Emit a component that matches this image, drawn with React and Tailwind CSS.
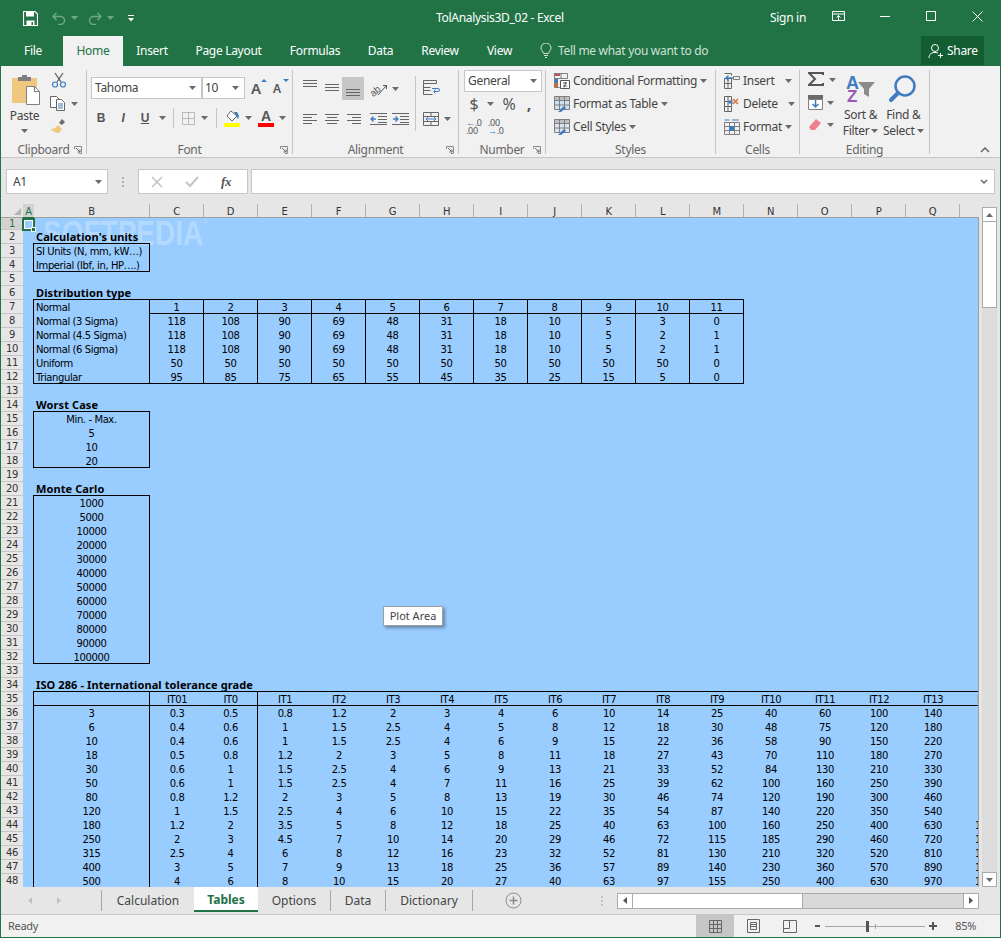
// Excel window: Tables sheet of TolAnalysis3D_02
import { Fragment } from "react"

const UI = "font-['Noto_Sans',sans-serif] tracking-[-0.3px]"
const CELL = "font-['DejaVu_Sans',sans-serif] tracking-[-0.4px]"

const HEAD_COLS = ["B", "C", "D", "E", "F", "G", "H", "I", "J", "K", "L", "M", "N", "O", "P", "Q"]

const DIST = {
  7: ["Normal", 1, 2, 3, 4, 5, 6, 7, 8, 9, 10, 11],
  8: ["Normal (3 Sigma)", 118, 108, 90, 69, 48, 31, 18, 10, 5, 3, 0],
  9: ["Normal (4.5 Sigma)", 118, 108, 90, 69, 48, 31, 18, 10, 5, 2, 1],
  10: ["Normal (6 Sigma)", 118, 108, 90, 69, 48, 31, 18, 10, 5, 2, 1],
  11: ["Uniform", 50, 50, 50, 50, 50, 50, 50, 50, 50, 50, 0],
  12: ["Triangular", 95, 85, 75, 65, 55, 45, 35, 25, 15, 5, 0],
}

const ISO_HEAD = ["", "IT01", "IT0", "IT1", "IT2", "IT3", "IT4", "IT5", "IT6", "IT7", "IT8", "IT9", "IT10", "IT11", "IT12", "IT13", "IT14"]
const ISO = [
  [3, 0.3, 0.5, 0.8, 1.2, 2, 3, 4, 6, 10, 14, 25, 40, 60, 100, 140, 250],
  [6, 0.4, 0.6, 1, 1.5, 2.5, 4, 5, 8, 12, 18, 30, 48, 75, 120, 180, 300],
  [10, 0.4, 0.6, 1, 1.5, 2.5, 4, 6, 9, 15, 22, 36, 58, 90, 150, 220, 360],
  [18, 0.5, 0.8, 1.2, 2, 3, 5, 8, 11, 18, 27, 43, 70, 110, 180, 270, 430],
  [30, 0.6, 1, 1.5, 2.5, 4, 6, 9, 13, 21, 33, 52, 84, 130, 210, 330, 520],
  [50, 0.6, 1, 1.5, 2.5, 4, 7, 11, 16, 25, 39, 62, 100, 160, 250, 390, 620],
  [80, 0.8, 1.2, 2, 3, 5, 8, 13, 19, 30, 46, 74, 120, 190, 300, 460, 740],
  [120, 1, 1.5, 2.5, 4, 6, 10, 15, 22, 35, 54, 87, 140, 220, 350, 540, 870],
  [180, 1.2, 2, 3.5, 5, 8, 12, 18, 25, 40, 63, 100, 160, 250, 400, 630, 1000],
  [250, 2, 3, 4.5, 7, 10, 14, 20, 29, 46, 72, 115, 185, 290, 460, 720, 1150],
  [315, 2.5, 4, 6, 8, 12, 16, 23, 32, 52, 81, 130, 210, 320, 520, 810, 1300],
  [400, 3, 5, 7, 9, 13, 18, 25, 36, 57, 89, 140, 230, 360, 570, 890, 1400],
  [500, 4, 6, 8, 10, 15, 20, 27, 40, 63, 97, 155, 250, 400, 630, 970, 1550],
]

const BOXES = {
  15: "Min. - Max.", 16: 5, 17: 10, 18: 20,
  21: 1000, 22: 5000, 23: 10000, 24: 20000, 25: 30000, 26: 40000,
  27: 50000, 28: 60000, 29: 70000, 30: 80000, 31: 90000, 32: 100000,
}

const TITLES = { 2: "Calculation's units", 6: "Distribution type", 14: "Worst Case", 20: "Monte Carlo", 34: "ISO 286 - International tolerance grade" }

function Caret({ className = "", color = "#6a6a6a" }) {
  return (
    <svg width="7" height="4" viewBox="0 0 7 4" className={className}>
      <path d="M0 0h7L3.5 4z" fill={color} />
    </svg>
  )
}

function Launcher() {
  return (
    <svg width="8" height="8" viewBox="0 0 8 8" className="absolute right-[4px] bottom-0">
      <path d="M0.5 3V0.5H7.5V7.5H5" fill="none" stroke="#8a8a8a" />
      <path d="M2 2l4 4M6 3.5V6H3.5" fill="none" stroke="#6a6a6a" />
    </svg>
  )
}

function Group({ label, className, launcher, children }) {
  return (
    <div className={`relative shrink-0 h-[84px] flex flex-col border-r border-[#c6c6c6] ${className}`}>
      <div className="h-[73px] shrink-0">{children}</div>
      <div className="shrink-0 text-center text-[12px] leading-[14px] text-[#666666]">{label}</div>
      {launcher && <Launcher />}
    </div>
  )
}

function Lines({ d, w = 16, h = 14, color = "#666666" }) {
  return (
    <svg width={w} height={h} viewBox={`0 0 ${w} ${h}`}>
      <path d={d} stroke={color} fill="none" />
    </svg>
  )
}

function TitleBar() {
  return (
    <div className="relative h-9 shrink-0 flex items-center bg-[#217346] text-white text-[12px]">
      <svg width="15" height="15" viewBox="0 0 15 15" className="ml-[22px]">
        <path d="M0.5 0.5h11.5l2.5 2.5v11.5h-14z" fill="none" stroke="#fff" strokeWidth="1.2" />
        <path d="M3 1h8v4.5h-8zM3.5 9.5h8v5h-8z" fill="#fff" />
        <path d="M8.5 11h1.5v3h-1.500z" fill="#217346" />
      </svg>
      <svg width="14" height="13" viewBox="0 0 14 13" className="ml-[14px]">
        <path d="M4.5 1L1 4.5 4.5 8M1.5 4.5h7a4 4 0 0 1 0 8H6" fill="none" stroke="#6fa888" strokeWidth="1.5" />
      </svg>
      <Caret className="ml-[5px]" color="#6fa888" />
      <svg width="14" height="13" viewBox="0 0 14 13" className="ml-[10px]">
        <path d="M9.5 1L13 4.5 9.5 8M12.5 4.5h-7a4 4 0 0 0 0 8H8" fill="none" stroke="#6fa888" strokeWidth="1.5" />
      </svg>
      <Caret className="ml-[5px]" color="#6fa888" />
      <svg width="6" height="7" viewBox="0 0 6 7" className="ml-[14px]">
        <path d="M0 0h6v1H0zM0 3h6L3 6.5z" fill="#fff" />
      </svg>
      <div className="absolute left-[435px] top-[9px] whitespace-nowrap">TolAnalysis3D_02 - Excel</div>
      <div className="absolute left-[769px] top-[9px]">Sign in</div>
      <svg width="13" height="11" viewBox="0 0 13 11" className="absolute left-[831px] top-[11px]">
        <path d="M0.5 0.5h12v9h-12zM0.5 3h12M6.5 9V4.5M4.5 6.5l2-2 2 2" fill="none" stroke="#fff" />
      </svg>
      <div className="absolute left-[879px] top-[16px] w-[10px] h-px bg-white" />
      <div className="absolute left-[925px] top-[11px] w-[10px] h-[10px] border border-white" />
      <svg width="11" height="11" viewBox="0 0 11 11" className="absolute left-[971px] top-[11px]">
        <path d="M0.5 0.5l10 10M10.5 0.5l-10 10" stroke="#fff" />
      </svg>
    </div>
  )
}

function RibbonTabs() {
  const tabs = [
    ["File", "w-[62px] pl-[2px]"],
    ["Home", "w-[60px] bg-[#f1f1f1] text-[#217346]"],
    ["Insert", "w-[58px]"],
    ["Page Layout", "w-[95px]"],
    ["Formulas", "w-[78px]"],
    ["Data", "w-[53px]"],
    ["Review", "w-[66px]"],
    ["View", "w-[53px]"],
  ]
  return (
    <div className="relative h-[30px] shrink-0 flex bg-[#217346] text-white text-[12px]">
      {tabs.map(([name, cls]) => (
        <div key={name} className={`h-full flex items-center justify-center ${cls}`}>{name}</div>
      ))}
      <svg width="12" height="15" viewBox="0 0 12 15" className="ml-[14px] mt-[7px]">
        <path d="M3.5 10.5C3 8 1 7.5 1 5a5 5 0 0 1 10 0c0 2.5-2 3-2.5 5.5zM4 12.5h4M5 14.5h2" fill="none" stroke="#d3e3da" />
      </svg>
      <div className="ml-[6px] flex items-center text-[#cfe0d6] whitespace-nowrap">Tell me what you want to do</div>
      <div className="absolute left-[920px] top-0 w-[63px] h-[29px] bg-[#135d33] flex items-center pl-[7px] gap-[3px]">
        <svg width="16" height="16" viewBox="0 0 16 16">
          <circle cx="7" cy="5" r="3.5" fill="none" stroke="#fff" />
          <path d="M1 15c0-4 3-5.5 6-5.5 1 0 2 .2 3 .7M12.5 10v5M10 12.5h5" fill="none" stroke="#fff" />
        </svg>
        <span>Share</span>
      </div>
    </div>
  )
}

function Clipboard() {
  return (
    <Group label="Clipboard" launcher className="w-[86px]">
      <div className="flex">
        <div className="w-[47px] flex flex-col items-center">
          <svg width="30" height="32" viewBox="0 0 30 32" className="mt-[4px] ml-[4px]">
            <path d="M0 4h25v25H0z" fill="#f0c77f" />
            <path d="M6 3h4V1h5v2h4v4H6z" fill="#7f7f7f" />
            <path d="M14.5 12.5h8l5 5v13h-13z" fill="#fff" stroke="#7f7f7f" />
            <path d="M22.5 12.5v5h5" fill="none" stroke="#7f7f7f" />
          </svg>
          <div className="text-[12px] leading-[14px] mt-[3px] text-[#444444]">Paste</div>
          <Caret className="mt-[6px]" />
        </div>
        <div className="flex flex-col items-start pt-[2px]">
          <svg width="16" height="16" viewBox="0 0 16 16" className="ml-[3px]">
            <path d="M4 1l6 9M12 1l-6 9" stroke="#555555" fill="none" strokeWidth="1.2" />
            <circle cx="4" cy="12.5" r="2.5" fill="none" stroke="#3f7cbf" strokeWidth="1.2" />
            <circle cx="12" cy="12.5" r="2.5" fill="none" stroke="#3f7cbf" strokeWidth="1.2" />
          </svg>
          <div className="flex items-center mt-[8px] ml-[2px]">
            <svg width="16" height="15" viewBox="0 0 16 15">
              <path d="M.5.5h6l3 3v8h-9z" fill="#fff" stroke="#666666" />
              <path d="M6.5 3.5h5l3 3v8h-8z" fill="#fff" stroke="#666666" />
              <path d="M8 8h5M8 10h5M8 12h5" stroke="#3f7cbf" />
            </svg>
            <Caret className="ml-[5px]" />
          </div>
          <svg width="16" height="16" viewBox="0 0 16 16" className="mt-[7px] ml-[2px]">
            <path d="M8 7l4 4-3 4c-3 0-7-2-8-4 2 0 5-1 7-4z" fill="#f0c77f" />
            <path d="M9 5l3-4 3 3-3 3z" fill="#6a6a6a" />
          </svg>
        </div>
      </div>
    </Group>
  )
}

function Font() {
  return (
    <Group label="Font" launcher className="w-[206px]">
      <div className="flex items-center pl-[4px] pt-[7px]">
        <div className="w-[111px] h-[22px] bg-white border border-[#c6c6c6] flex items-center justify-between pl-[3px] pr-[5px] text-[12px] text-[#444444]">
          Tahoma <Caret />
        </div>
        <div className="w-[43px] h-[22px] bg-white border border-[#c6c6c6] flex items-center justify-between pl-[2px] pr-[5px] text-[12px] text-[#444444]">
          10 <Caret />
        </div>
        <div className="relative ml-[6px] w-[14px] text-[15px] leading-[18px] font-semibold text-[#555555]">
          A<span className="absolute -right-[2px] top-0 border-x-[3px] border-b-[3px] border-x-transparent border-b-[#3f7cbf]" />
        </div>
        <div className="relative ml-[8px] w-[14px] pt-[2px] text-[12px] leading-[16px] font-semibold text-[#555555]">
          A<span className="absolute -right-[2px] top-0 border-x-[3px] border-t-[3px] border-x-transparent border-t-[#3f7cbf]" />
        </div>
      </div>
      <div className="flex items-center pl-[3px] mt-[9px] h-[20px] text-[#555555] font-['Liberation_Sans',sans-serif]">
        <span className="w-[22px] text-center font-bold text-[12px]">B</span>
        <span className="w-[22px] text-center italic font-bold text-[12px]">I</span>
        <span className="w-[22px] text-center underline font-bold text-[12px]">U</span>
        <Caret className="ml-[3px]" />
        <div className="ml-[7px] w-px h-[20px] bg-[#c6c6c6]" />
        <svg width="13" height="13" viewBox="0 0 13 13" className="ml-[8px]">
          <path d="M.5.5h12v12H.5zM6.5.5v12M.5 6.5h12" fill="none" stroke="#888888" strokeDasharray="1 1" />
        </svg>
        <Caret className="ml-[6px]" />
        <div className="ml-[8px] w-px h-[20px] bg-[#c6c6c6]" />
        <div className="ml-[7px] w-[16px] flex flex-col items-center">
          <svg width="15" height="13" viewBox="0 0 15 13">
            <path d="M6 1l6 5-5 5-5-5z" fill="#fff" stroke="#666666" />
            <path d="M9 2h3l2 4-1 3-2-3z" fill="#3f7cbf" />
          </svg>
          <div className="w-[16px] h-[4px] bg-[#ffff00]" />
        </div>
        <Caret className="ml-[5px]" />
        <div className="ml-[6px] w-[16px] flex flex-col items-center">
          <span className="text-[14px] leading-[13px] font-bold">A</span>
          <div className="w-[16px] h-[4px] bg-[#ff0000]" />
        </div>
        <Caret className="ml-[5px]" />
      </div>
    </Group>
  )
}

function Alignment() {
  const L = (ys, x1 = 1, x2 = 15) => ys.map((y, i) => `M${Array.isArray(x1) ? x1[i] : x1} ${y}H${Array.isArray(x2) ? x2[i] : x2}`).join("")
  return (
    <Group label="Alignment" launcher className="w-[166px]">
      <div className="flex">
        <div className="w-[122px] pl-[9px]">
          <div className="flex items-center pt-[7px] h-[30px]">
            <div className="w-[22px] -mt-[4px]"><Lines d={L([0.5, 3.5, 6.5])} /></div>
            <div className="w-[18px] -mt-[4px]"><Lines d={L([4.5, 7.5, 10.5])} /></div>
            <div className="w-[22px] h-[23px] bg-[#c6c6c6] flex items-center justify-center">
              <Lines d={L([7.5, 10.5, 13.5])} />
            </div>
            <svg width="18" height="16" viewBox="0 0 18 16" className="ml-[6px]">
              <text x="0" y="13" fontSize="10" fill="#555555" transform="rotate(-40 6 10)" fontFamily="Liberation Sans">ab</text>
              <path d="M8 14l8-9M13 4.5l3.5 0 0 3.5" stroke="#555555" fill="none" />
            </svg>
            <Caret className="ml-[4px]" />
          </div>
          <div className="flex items-center mt-[13px]">
            <div className="w-[22px]"><Lines d={L([1.5, 4.5, 7.5, 10.5], 1, [15, 10, 15, 10])} h={12} /></div>
            <div className="w-[22px]"><Lines d={L([1.5, 4.5, 7.5, 10.5], [1, 3, 1, 3], [15, 13, 15, 13])} h={12} /></div>
            <div className="w-[24px]"><Lines d={L([1.5, 4.5, 7.5, 10.5], [1, 6, 1, 6], 15)} h={12} /></div>
            <svg width="17" height="12" viewBox="0 0 17 12">
              <path d="M0 .5h17M8 3.5h9M8 6.5h9M8 9.5h9M0 11.5h17" stroke="#666666" fill="none" />
              <path d="M6 6H1M3.5 3.5L1 6l2.5 2.500" stroke="#3f7cbf" fill="none" strokeWidth="1.3" />
            </svg>
            <svg width="17" height="12" viewBox="0 0 17 12" className="ml-[5px]">
              <path d="M0 .5h17M8 3.5h9M8 6.5h9M8 9.5h9M0 11.5h17" stroke="#666666" fill="none" />
              <path d="M1 6h5M3.5 3.5L6 6 3.5 8.5" stroke="#3f7cbf" fill="none" strokeWidth="1.3" />
            </svg>
          </div>
        </div>
        <div className="mt-[6px] h-[55px] w-px bg-[#c6c6c6]" />
        <div className="pl-[7px] pt-[10px]">
          <svg width="17" height="15" viewBox="0 0 17 15" className="block">
            <path d="M.5.5h13v3h-13zM.5 3.5v11h9M.5 7.5h7M.5 10.5h7" fill="none" stroke="#666666" />
            <path d="M9 8.5h6a1.5 1.5 0 0 1 0 3h-4M12.5 9.500L10.5 11.5l2 2" fill="none" stroke="#3f7cbf" />
          </svg>
          <div className="flex items-center mt-[17px]">
            <svg width="16" height="14" viewBox="0 0 16 14">
              <path d="M.5.5h15v13h-15zM.5 4.5h15M.5 9.5h15M8 .5v4M8 9.5v4" fill="none" stroke="#666666" />
              <path d="M3 7h10M5 5L3 7l2 2M11 5l2 2-2 2" fill="none" stroke="#3f7cbf" />
            </svg>
            <Caret className="ml-[5px]" />
          </div>
        </div>
      </div>
    </Group>
  )
}

function NumberGroup() {
  return (
    <Group label="Number" launcher className="w-[87px]">
      <div className="ml-[5px] w-[78px] h-[22px] bg-white border border-[#c6c6c6] flex items-center justify-between pl-[3px] pr-[4px] text-[12px] text-[#444444]">
        General <Caret />
      </div>
      <div className="flex items-center mt-[1px] h-[21px] text-[#555555] text-[16px] text-center">
        <span className="ml-[8px] w-[14px]">$</span>
        <Caret className="ml-[6px]" />
        <span className="ml-[7px] w-[16px]">%</span>
        <span className="ml-[8px] w-[8px] font-bold leading-[10px]">,</span>
      </div>
      <div className="flex items-center mt-[5px] text-[9px] leading-[8px] text-[#555555]">
        <div className="ml-[7px] w-[18px]"><span className="text-[#3f7cbf]">←</span>.0<br />.00</div>
        <div className="ml-[4px] w-[18px]">.00<br /><span className="text-[#3f7cbf]">→</span>.0</div>
      </div>
    </Group>
  )
}

function StyleRow({ icon, label, caretClass = "ml-[3px]" }) {
  return (
    <div className="h-[23px] flex items-center text-[12px] text-[#444444] whitespace-nowrap">
      <div className="w-[19px] shrink-0">{icon}</div>
      {label}
      <Caret className={caretClass} />
    </div>
  )
}

function TableIcon({ fill = "#cfe0f2" }) {
  return (
    <svg width="16" height="16" viewBox="0 0 16 16" className="block">
      <path d="M.5.5h15v4H.5z" fill="#bfbfbf" />
      <path d="M.5 4.5h15v9H.5z" fill={fill} />
      <path d="M.5.5h15v13H.5zM.5 4.5h15M.5 9h15M5.5.5v13M10.5.5v13" fill="none" stroke="#7f7f7f" />
      <path d="M5 15l5-5 2 2-5 4H4z" fill="#3f7cbf" />
    </svg>
  )
}

function Styles() {
  return (
    <Group label="Styles" className="w-[170px]">
      <div className="pl-[8px] -mt-px">
        <StyleRow
          label="Conditional Formatting"
          icon={
            <svg width="16" height="16" viewBox="0 0 16 16" className="block">
              <path d="M0 0h6v3H0z" fill="#c0504d" />
              <path d="M0 6h4v4H0z" fill="#3f7cbf" />
              <path d="M0 10h4v4H0z" fill="#d9652b" />
              <path d="M.5.5h13v5h-13zM.5 5.5v9h5M7 .5v5" fill="none" stroke="#7f7f7f" />
              <path d="M6.5 7.5h9v8h-9zM9 10h4M9 13h4M12 9l-2 5.5" fill="#fff" stroke="#555555" />
            </svg>
          }
        />
        <StyleRow label="Format as Table" icon={<TableIcon />} />
        <StyleRow label="Cell Styles" icon={<TableIcon fill="#dbe5f1" />} />
      </div>
    </Group>
  )
}

function Cells() {
  return (
    <Group label="Cells" className="w-[84px]">
      <div className="pl-[8px] -mt-px">
        <StyleRow
          label="Insert"
          caretClass="ml-[10px]"
          icon={
            <svg width="16" height="16" viewBox="0 0 16 16" className="block">
              <path d="M.5 5.5h7v10h-7zM.5 10.5h7M4 5.5v10M.5.5h7v2" fill="none" stroke="#666666" />
              <path d="M9.5 3.5h6v3h-6z" fill="none" stroke="#7f7f7f" />
              <path d="M9 5H2M4.5 2.5L2 5l2.5 2.5" fill="none" stroke="#3f7cbf" strokeWidth="1.3" />
            </svg>
          }
        />
        <StyleRow
          label="Delete"
          caretClass="ml-[10px]"
          icon={
            <svg width="16" height="16" viewBox="0 0 16 16" className="block">
              <path d="M.5.5h7v15h-7zM.5 5.5h7M.5 10.5h7M4 .5v15" fill="none" stroke="#666666" />
              <path d="M9 3l5 5M14 3l-5 5" stroke="#e0703a" strokeWidth="1.5" />
              <path d="M4.5 4.5h4v3h-4z" fill="#3f7cbf" />
            </svg>
          }
        />
        <StyleRow
          label="Format"
          icon={
            <svg width="16" height="16" viewBox="0 0 16 16" className="block">
              <path d="M.5 3.5h15v12H.5zM.5 7.5h15M.5 11.5h15M5.5 3.5v12M10.5 3.5v12" fill="none" stroke="#7f7f7f" />
              <path d="M5 7h5v5H5z" fill="#3f7cbf" />
              <path d="M.5 1h5M8 1h7" stroke="#3f7cbf" />
            </svg>
          }
        />
      </div>
    </Group>
  )
}

function Editing() {
  return (
    <Group label="Editing" className="w-[130px]">
      <div className="flex">
        <div className="w-[44px] pl-[8px] pt-[2px] flex flex-col gap-[8px]">
          <div className="flex items-center">
            <svg width="16" height="15" viewBox="0 0 16 15">
              <path d="M15 3V1H1l6 6-6 6h14v-2" fill="none" stroke="#555555" strokeWidth="2" />
            </svg>
            <Caret className="ml-[5px]" />
          </div>
          <div className="flex items-center">
            <svg width="15" height="15" viewBox="0 0 15 15">
              <path d="M0 0h15v4H0z" fill="#6a6a6a" />
              <path d="M.5 4.5h14v10H.5z" fill="#fff" stroke="#7f7f7f" />
              <path d="M7.5 5v7M4.5 9l3 3 3-3" stroke="#3f7cbf" strokeWidth="1.5" fill="none" />
            </svg>
            <Caret className="ml-[4px]" />
          </div>
          <div className="flex items-center">
            <svg width="14" height="14" viewBox="0 0 14 14">
              <path d="M8 1l5 4-6 7H3L1 9z" fill="#ef7f91" />
            </svg>
            <Caret className="ml-[5px]" />
          </div>
        </div>
        <div className="w-[34px] flex flex-col items-center pt-[4px] text-[12px] leading-[16px] text-[#444444]">
          <svg width="32" height="33" viewBox="0 0 32 33">
            <text x="1" y="15" fontSize="18" fontWeight="bold" fill="#3f7cbf" fontFamily="Liberation Sans">A</text>
            <text x="2" y="28" fontSize="17" fontWeight="bold" fill="#9b59b6" fontFamily="Liberation Sans">Z</text>
            <path d="M13 8h17l-6 7v8l-5-3v-5z" fill="#8a8a8a" />
          </svg>
          <div className="whitespace-nowrap">Sort &amp;</div>
          <div className="flex items-center whitespace-nowrap">Filter<Caret className="ml-[2px]" /></div>
        </div>
        <div className="w-[52px] flex flex-col items-center pt-[4px] text-[12px] leading-[16px] text-[#444444]">
          <svg width="30" height="33" viewBox="0 0 30 33">
            <circle cx="17" cy="12" r="9.5" fill="none" stroke="#3f7cbf" strokeWidth="2.5" />
            <path d="M10 19L3 26" stroke="#3f7cbf" strokeWidth="4" strokeLinecap="round" />
          </svg>
          <div className="whitespace-nowrap">Find &amp;</div>
          <div className="flex items-center whitespace-nowrap">Select<Caret className="ml-[2px]" /></div>
        </div>
      </div>
    </Group>
  )
}

function Ribbon() {
  return (
    <div className="relative h-[92px] shrink-0 flex pt-[4px] bg-[#f1f1f1] border-b border-[#c6c6c6]">
      <Clipboard />
      <Font />
      <Alignment />
      <NumberGroup />
      <Styles />
      <Cells />
      <Editing />
      <svg width="10" height="6" viewBox="0 0 10 6" className="absolute right-[10px] bottom-[4px]">
        <path d="M1 5l4-4 4 4" fill="none" stroke="#666666" strokeWidth="1.5" />
      </svg>
    </div>
  )
}

function FormulaBar() {
  return (
    <div className="h-[46px] shrink-0 flex items-start pt-[11px] pl-[5px] bg-[#e6e6e6]">
      <div className="w-[102px] h-[25px] bg-white border border-[#c6c6c6] flex items-center justify-between pl-[6px] pr-[5px] text-[12px] text-[#444444]">
        A1 <Caret />
      </div>
      <div className="w-[30px] h-[25px] flex flex-col items-center justify-center gap-[2px]">
        <div className="w-[2px] h-[2px] bg-[#b0b0b0]" />
        <div className="w-[2px] h-[2px] bg-[#b0b0b0]" />
        <div className="w-[2px] h-[2px] bg-[#b0b0b0]" />
      </div>
      <div className="w-[110px] h-[25px] bg-white border border-[#c6c6c6] flex items-center text-[#b8b8b8]">
        <svg width="12" height="12" viewBox="0 0 12 12" className="ml-[12px]">
          <path d="M1 1l10 10M11 1L1 11" stroke="#c4c4c4" strokeWidth="1.6" />
        </svg>
        <svg width="14" height="12" viewBox="0 0 14 12" className="ml-[22px]">
          <path d="M1 6l4 4 8-9" stroke="#c4c4c4" strokeWidth="2" fill="none" />
        </svg>
        <span className="ml-[22px] text-[13px] italic font-['Liberation_Serif',serif] font-bold text-[#555555]">fx</span>
      </div>
      <div className="ml-[3px] w-[744px] h-[25px] bg-white border border-[#c6c6c6] flex items-center justify-end pr-[6px]">
        <svg width="8" height="6" viewBox="0 0 8 6">
          <path d="M1 1l3 3 3-3" fill="none" stroke="#666666" strokeWidth="1.5" />
        </svg>
      </div>
    </div>
  )
}

// one row of the sheet; B and C.. cells carry their own table lines
function SheetRow({ r }) {
  const height = r === 1 ? "h-[12px]" : "h-[14px]"
  const cell = "w-[54px] shrink-0 h-full text-center"
  let content = null

  if (TITLES[r]) {
    content = <div className="pl-[3px] font-bold tracking-[0.1px] leading-[14px] font-['Noto_Sans',sans-serif] text-[11px] whitespace-nowrap">{TITLES[r]}</div>
  } else if (r === 3 || r === 4) {
    content = (
      <div className={`w-[117px] h-full pl-[2px] border-x border-black whitespace-nowrap ${r === 4 ? "border-b" : ""}`}>
        {r === 3 ? "SI Units (N, mm, kW…)" : "Imperial (lbf, in, HP….)"}
      </div>
    )
  } else if (DIST[r]) {
    const [label, ...vals] = DIST[r]
    content = (
      <>
        <div className={`w-[117px] h-full pl-[2px] border-x border-black ${r === 12 ? "border-b" : ""}`}>{label}</div>
        {vals.map((v, i) => (
          <div key={i} className={`${cell} border-r border-black ${r === 7 || r === 12 ? "border-b" : ""}`}>{v}</div>
        ))}
      </>
    )
  } else if (BOXES[r] !== undefined) {
    content = (
      <div className={`w-[117px] h-full text-center border-x border-black ${r === 18 || r === 32 ? "border-b" : ""}`}>{BOXES[r]}</div>
    )
  } else if (r >= 35) {
    const vals = r === 35 ? ISO_HEAD : ISO[r - 36]
    content = (
      <>
        <div className={`w-[117px] shrink-0 h-full text-center border-x border-black ${r === 35 ? "border-b" : ""}`}>{vals[0]}</div>
        {vals.slice(1).map((v, i) => (
          <div key={i} className={`${cell} ${i === 1 ? "border-r border-black" : ""} ${r === 35 ? "border-b border-black" : ""}`}>{v}</div>
        ))}
      </>
    )
  }

  const topLine = r === 3 || r === 7 || r === 15 || r === 21 || r === 35
  return (
    <div className={`${height} flex leading-[16px] ${topLine ? "relative" : ""}`}>
      {content}
      {topLine && (
        <div className={`absolute left-0 -top-px h-px bg-black ${r === 3 || r === 15 || r === 21 ? "w-[117px]" : r === 7 ? "w-[711px]" : "w-[1000px]"}`} />
      )}
    </div>
  )
}

function Sheet() {
  const rows = Array.from({ length: 48 }, (_, i) => i + 1)
  return (
    <div className="relative h-[683px] shrink-0 flex bg-[#e6e6e6] text-[10px] text-black">
      <div className={`w-[978px] shrink-0 flex flex-col ${CELL}`}>
        {/* column headers */}
        <div className="h-[13px] shrink-0 flex border-b border-[#9f9f9f] leading-[15px] text-[#333333] box-content">
          <div className="relative w-[22px] shrink-0">
            <div className="absolute right-[2px] bottom-[2px] border-l-[7px] border-b-[7px] border-l-transparent border-b-[#b4b4b4]" />
          </div>
          <div className="w-[11px] shrink-0 text-center bg-[#d2d2d2] text-[#217346] border-b border-[#217346] -mb-px">A</div>
          {HEAD_COLS.map((c) => (
            <div key={c} className={`${c === "B" ? "w-[116px]" : "w-[54px]"} shrink-0 text-center border-r border-[#b1b1b1]`}>{c}</div>
          ))}
        </div>
        <div className="flex h-[669px] overflow-hidden">
          {/* row headers */}
          <div className="w-[22px] shrink-0 text-[#333333]">
            {rows.map((r) => (
              <div
                key={r}
                className={`${r === 1 ? "h-[12px] leading-[12px] bg-[#d2d2d2] text-[#217346]" : "h-[14px] leading-[13px]"} text-center border-b border-[#c6c6c6]`}
              >
                {r}
              </div>
            ))}
          </div>
          {/* cells */}
          <div className="relative flex-1 overflow-hidden bg-[#99ccff] border-r border-[#9f9f9f] pl-[10px]">
            {/* watermark */}
            <div className="absolute left-[20px] top-[-1px] flex items-start origin-left scale-x-[0.8] text-[35px] leading-[32px] font-bold tracking-normal text-[#b3d9ff] font-['Liberation_Sans',sans-serif] whitespace-nowrap">
              SOFTPEDIA<span className="text-[8px] leading-[12px] font-normal">®</span>
            </div>
            <div className="relative">
              {rows.map((r) => (
                <SheetRow key={r} r={r} />
              ))}
            </div>
          </div>
        </div>
      </div>
      {/* vertical scrollbar */}
      <div className="ml-[3px] w-[15px] shrink-0 flex flex-col">
        <div className="h-[3px] shrink-0" />
        <div className="h-[15px] bg-white border border-[#ababab] flex items-center justify-center">
          <svg width="7" height="4" viewBox="0 0 7 4"><path d="M0 4h7L3.5 0z" fill="#6a6a6a" /></svg>
        </div>
        <div className="h-[86px] bg-white border border-[#ababab] border-t-0" />
        <div className="flex-1 bg-[#dcdcdc]" />
        <div className="h-[15px] bg-white border border-[#ababab] flex items-center justify-center">
          <Caret />
        </div>
      </div>

      {/* selected cell A1 */}
      <div className="absolute left-[21px] top-[14px] w-[13px] h-[13px] border-2 border-[#217346] outline outline-1 -outline-offset-3 outline-white" />
      <div className="absolute left-[30px] top-[23px] w-[5px] h-[5px] bg-[#217346] border border-white" />
      {/* chart tooltip */}
      <div className="absolute left-[382px] top-[402px] w-[60px] h-[20px] flex items-center justify-center bg-white border border-[#a0a0a0] text-[11px] tracking-normal text-[#444444] shadow-[2px_2px_3px_rgba(0,0,0,0.35)]">
        Plot Area
      </div>
    </div>
  )
}

function TabsBar() {
  const Sep = () => <div className="w-px h-[21px] bg-[#a6a6a6] shrink-0" />
  const tabs = [
    ["Calculation", "w-[92px]"],
    ["Tables", "w-[64px]"],
    ["Options", "w-[72px]"],
    ["Data", "w-[54px]"],
    ["Dictionary", "w-[86px]"],
  ]
  return (
    <div className="relative h-[28px] shrink-0 flex items-center bg-[#e6e6e6] border-b border-[#c6c6c6] text-[12px] tracking-normal text-[#444444]">
      <svg width="4" height="7" viewBox="0 0 4 7" className="ml-[27px]"><path d="M4 0v7L0 3.5z" fill="#c0c0c0" /></svg>
      <svg width="4" height="7" viewBox="0 0 4 7" className="ml-[25px]"><path d="M0 0v7l4-3.5z" fill="#c0c0c0" /></svg>
      <div className="ml-[40px]"><Sep /></div>
      {tabs.map(([name, cls]) => (
        <Fragment key={name}>
          {name === "Tables" ? (
            <div className={`h-[25px] self-start pt-[2px] ${cls} bg-white border-b-2 border-[#217346] flex items-center justify-center font-bold text-[#217346]`}>{name}</div>
          ) : (
            <div className={`${cls} text-center`}>{name}</div>
          )}
          {name !== "Tables" && name !== "Calculation" && <Sep />}
        </Fragment>
      ))}
      <svg width="17" height="17" viewBox="0 0 17 17" className="ml-[32px]">
        <circle cx="8.5" cy="8.5" r="7.5" fill="none" stroke="#8a8a8a" />
        <path d="M8.5 4.5v8M4.5 8.5h8" stroke="#8a8a8a" strokeWidth="1.5" />
      </svg>
      <div className="ml-[79px] flex flex-col gap-[2px]">
        <div className="w-[2px] h-[2px] bg-[#c0c0c0]" />
        <div className="w-[2px] h-[2px] bg-[#c0c0c0]" />
        <div className="w-[2px] h-[2px] bg-[#c0c0c0]" />
      </div>
      <div className="ml-[14px] w-[362px] h-[16px] flex bg-[#d9d9d9] border border-[#ababab]">
        <div className="w-[15px] bg-white border-r border-[#ababab] flex items-center justify-center">
          <svg width="4" height="7" viewBox="0 0 4 7"><path d="M4 0v7L0 3.5z" fill="#555555" /></svg>
        </div>
        <div className="w-[170px] bg-white border-r border-[#ababab]" />
        <div className="flex-1" />
        <div className="w-[15px] bg-white border-l border-[#ababab] flex items-center justify-center">
          <svg width="4" height="7" viewBox="0 0 4 7"><path d="M0 0v7l4-3.5z" fill="#555555" /></svg>
        </div>
      </div>
    </div>
  )
}

function StatusBar() {
  return (
    <div className="flex-1 flex items-center bg-[#f1f1f1] text-[11px] text-[#555555]">
      <span className="ml-[7px]">Ready</span>
      <div className="ml-auto w-[38px] h-full bg-[#c6c6c6] flex items-center justify-center">
        <svg width="13" height="13" viewBox="0 0 13 13">
          <path d="M.5.5h12v12H.5zM.5 4.5h12M.5 8.5h12M4.5.5v12M8.5.5v12" fill="none" stroke="#666666" />
        </svg>
      </div>
      <svg width="13" height="14" viewBox="0 0 13 14" className="ml-[13px]">
        <path d="M.5.5h12v13H.5zM3.5 3.5h6v7h-6zM3.5 5.5h6M3.5 7.5h6" fill="none" stroke="#666666" />
      </svg>
      <svg width="14" height="13" viewBox="0 0 14 13" className="ml-[23px]">
        <path d="M.5.5h13v12H.5zM.5 8.5h6V.5" fill="none" stroke="#666666" />
      </svg>
      <div className="ml-[18px] w-[5px] h-[2px] bg-[#555555]" />
      <div className="relative ml-[5px] w-[100px] h-px bg-[#a6a6a6]">
        <div className="absolute left-[41px] -top-[5px] w-[3px] h-[11px] bg-[#555555]" />
        <div className="absolute left-[50px] -top-[2px] w-px h-[5px] bg-[#a6a6a6]" />
      </div>
      <svg width="8" height="8" viewBox="0 0 8 8" className="ml-[4px]">
        <path d="M4 0v8M0 4h8" stroke="#555555" strokeWidth="2" />
      </svg>
      <span className="ml-[18px] mr-[24px]">85%</span>
    </div>
  )
}

export default function App() {
  return (
    <div className={`w-[1001px] h-[938px] flex flex-col overflow-hidden bg-[#e6e6e6] border-x border-b border-[#217346] ${UI}`}>
      <TitleBar />
      <RibbonTabs />
      <Ribbon />
      <FormulaBar />
      <Sheet />
      <TabsBar />
      <StatusBar />
    </div>
  )
}
